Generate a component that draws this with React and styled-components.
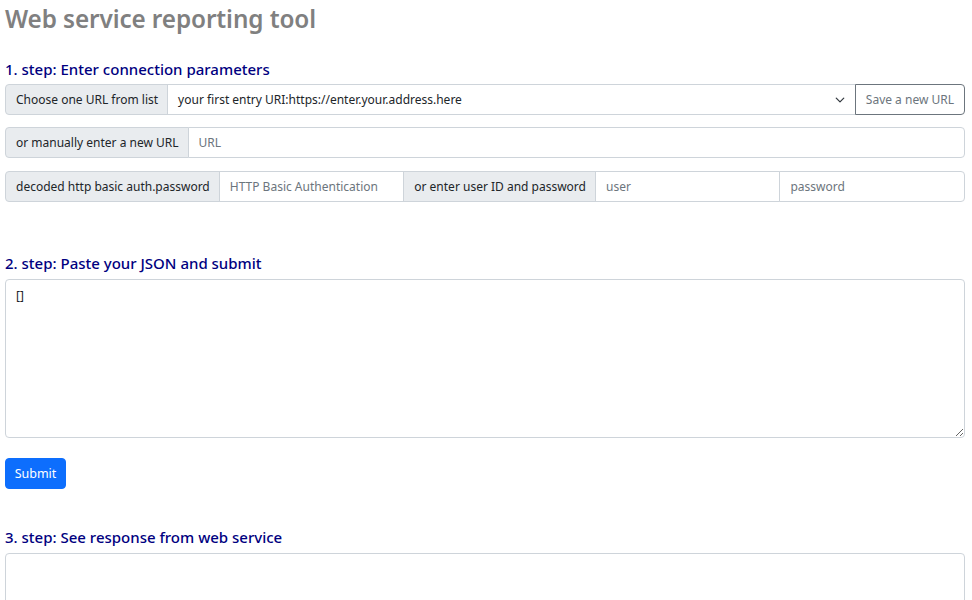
import React from 'react';
import styled, { createGlobalStyle } from 'styled-components';

const Global = createGlobalStyle`
  body {
    margin: 0;
    background: #ffffff;
    font-family: "Noto Sans", "Open Sans", sans-serif;
    color: #212529;
  }
`;

const Page = styled.div`
  padding: 0 7px 0 5px;
`;

const Title = styled.h1`
  margin: 0;
  padding-top: 2px;
  height: 38px;
  font-size: 24.3px;
  font-weight: 600;
  color: #808080;
  letter-spacing: -0.1px;
`;

const Step = styled.h5`
  margin: ${p => p.top}px 0 ${p => p.bottom || 5}px 0;
  font-size: 15px;
  font-weight: 500;
  color: #000080;
  line-height: 20px;
`;

const Group = styled.div`
  display: flex;
  height: 31px;
  margin-bottom: ${p => p.gap || 0}px;
`;

const Label = styled.span`
  display: flex;
  align-items: center;
  padding: 0 9px 0 10px;
  font-size: 12px;
  color: #212529;
  background: #e9ecef;
  border: 1px solid #ced4da;
  margin-left: -1px;
  white-space: nowrap;
  &:first-child {
    margin-left: 0;
    border-radius: 4px 0 0 4px;
  }
`;

const Field = styled.input`
  flex: 1;
  min-width: 0;
  margin-left: -1px;
  padding: 0 10px;
  font: inherit;
  font-size: 12px;
  color: #212529;
  border: 1px solid #ced4da;
  outline: none;
  &::placeholder {
    color: #6c757d;
  }
  &:last-child {
    border-radius: 0 4px 4px 0;
  }
`;

const Select = styled.div`
  flex: 1;
  display: flex;
  align-items: center;
  justify-content: space-between;
  margin-left: -1px;
  padding: 0 10px 0 10px;
  font-size: 12px;
  color: #212529;
  border: 1px solid #ced4da;
`;

const OutlineButton = styled.button`
  margin-left: -1px;
  padding: 0 10px;
  font: inherit;
  font-size: 12px;
  color: #6c757d;
  background: #fff;
  border: 1px solid #6c757d;
  border-radius: 0 4px 4px 0;
`;

const Area = styled.textarea`
  display: block;
  box-sizing: border-box;
  width: 100%;
  height: ${p => p.h}px;
  padding: 7px 10px;
  font-family: "Noto Sans", sans-serif;
  font-size: 12px;
  color: #212529;
  border: 1px solid #ced4da;
  border-radius: 4px;
  resize: vertical;
  outline: none;
`;

const Submit = styled.button`
  display: block;
  margin-top: 20px;
  width: 61px;
  height: 31px;
  font: inherit;
  font-size: 12.5px;
  color: #fff;
  background: #0d6efd;
  border: 1px solid #0d6efd;
  border-radius: 4px;
`;

const Chevron = () => (
  <svg width="10" height="10" viewBox="0 0 16 16">
    <path d="M2 5l6 6 6-6" fill="none" stroke="#343a40" strokeWidth="2" strokeLinecap="round" strokeLinejoin="round" />
  </svg>
);

export default function App() {
  return (
    <Page>
      <Global />
      <Title>Web service reporting tool</Title>

      <Step top={19}>1. step: Enter connection parameters</Step>
      <Group gap={12}>
        <Label>Choose one URL from list</Label>
        <Select>
          <span>your first entry URI:https://enter.your.address.here</span>
          <Chevron />
        </Select>
        <OutlineButton>Save a new URL</OutlineButton>
      </Group>
      <Group gap={13}>
        <Label>or manually enter a new URL</Label>
        <Field placeholder="URL" />
      </Group>
      <Group>
        <Label>decoded http basic auth.password</Label>
        <Field placeholder="HTTP Basic Authentication" />
        <Label>or enter user ID and password</Label>
        <Field placeholder="user" />
        <Field placeholder="password" type="password" />
      </Group>

      <Step top={51} bottom={6}>2. step: Paste your JSON and submit</Step>
      <Area h={159} defaultValue="[]" />
      <Submit>Submit</Submit>

      <Step top={38} bottom={6}>3. step: See response from web service</Step>
      <Area h={120} readOnly />
    </Page>
  );
}
